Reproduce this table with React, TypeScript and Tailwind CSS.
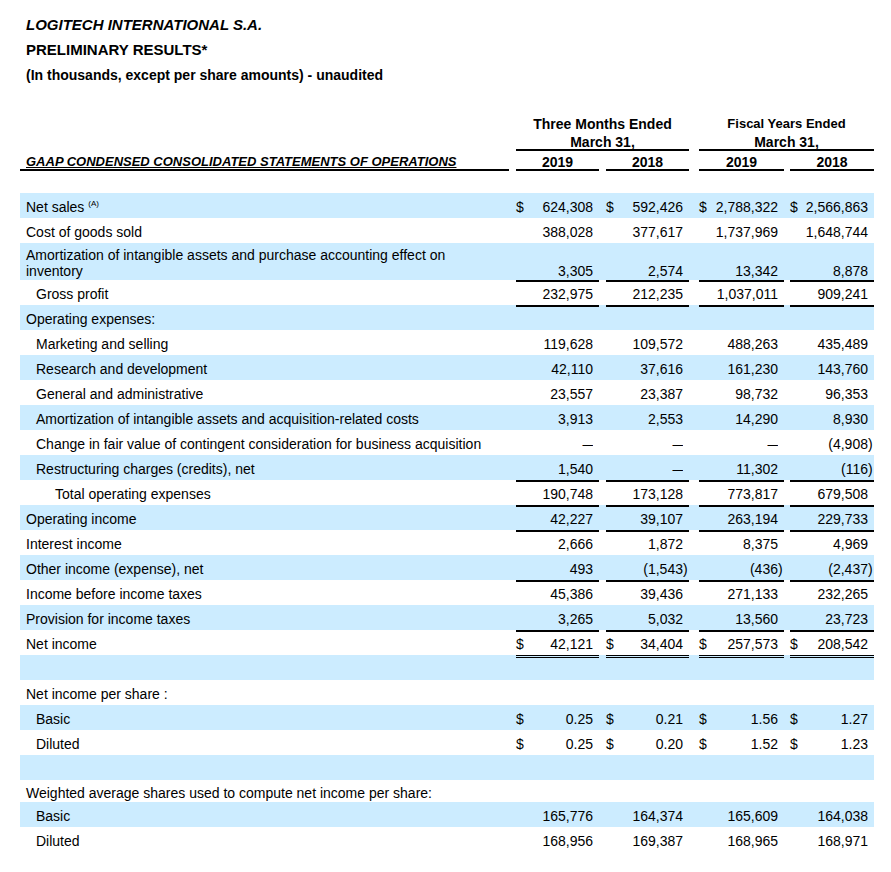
import React from 'react';

type Row = {
  label?: React.ReactNode;
  indent?: 0 | 1 | 2;
  vals?: string[];
  dollar?: boolean;
  shade?: boolean;
  ruleAbove?: 'single' | 'double';
  height?: 'tall' | 'short';
};

// column widths + gaps between the underline segments
const COLS = ['ml-[7px] w-[83px]', 'ml-[7px] w-[83px]', 'ml-[10px] w-[85px]', 'ml-[6px] w-[84px]'];

const rows: Row[] = [
  {
    label: (
      <>
        Net sales <sup className="text-[8px] -top-[6px]">(A)</sup>
      </>
    ),
    shade: true,
    dollar: true,
    vals: ['624,308', '592,426', '2,788,322', '2,566,863'],
  },
  { label: 'Cost of goods sold', vals: ['388,028', '377,617', '1,737,969', '1,648,744'] },
  {
    label: 'Amortization of intangible assets and purchase accounting effect on inventory',
    shade: true,
    height: 'tall',
    vals: ['3,305', '2,574', '13,342', '8,878'],
  },
  { label: 'Gross profit', indent: 1, ruleAbove: 'single', vals: ['232,975', '212,235', '1,037,011', '909,241'] },
  { label: 'Operating expenses:', shade: true, ruleAbove: 'single' },
  { label: 'Marketing and selling', indent: 1, vals: ['119,628', '109,572', '488,263', '435,489'] },
  { label: 'Research and development', indent: 1, shade: true, vals: ['42,110', '37,616', '161,230', '143,760'] },
  { label: 'General and administrative', indent: 1, vals: ['23,557', '23,387', '98,732', '96,353'] },
  {
    label: 'Amortization of intangible assets and acquisition-related costs',
    indent: 1,
    shade: true,
    vals: ['3,913', '2,553', '14,290', '8,930'],
  },
  {
    label: 'Change in fair value of contingent consideration for business acquisition',
    indent: 1,
    vals: ['—', '—', '—', '(4,908)'],
  },
  { label: 'Restructuring charges (credits), net', indent: 1, shade: true, vals: ['1,540', '—', '11,302', '(116)'] },
  { label: 'Total operating expenses', indent: 2, ruleAbove: 'single', vals: ['190,748', '173,128', '773,817', '679,508'] },
  { label: 'Operating income', shade: true, ruleAbove: 'single', vals: ['42,227', '39,107', '263,194', '229,733'] },
  { label: 'Interest income', ruleAbove: 'single', vals: ['2,666', '1,872', '8,375', '4,969'] },
  { label: 'Other income (expense), net', shade: true, vals: ['493', '(1,543)', '(436)', '(2,437)'] },
  { label: 'Income before income taxes', ruleAbove: 'single', vals: ['45,386', '39,436', '271,133', '232,265'] },
  { label: 'Provision for income taxes', shade: true, vals: ['3,265', '5,032', '13,560', '23,723'] },
  { label: 'Net income', ruleAbove: 'single', dollar: true, vals: ['42,121', '34,404', '257,573', '208,542'] },
  { shade: true, ruleAbove: 'double' },
  { label: 'Net income per share :' },
  { label: 'Basic', indent: 1, shade: true, dollar: true, vals: ['0.25', '0.21', '1.56', '1.27'] },
  { label: 'Diluted', indent: 1, dollar: true, vals: ['0.25', '0.20', '1.52', '1.23'] },
  { shade: true },
  { label: 'Weighted average shares used to compute net income per share:', height: 'short' },
  { label: 'Basic', indent: 1, shade: true, vals: ['165,776', '164,374', '165,609', '164,038'] },
  { label: 'Diluted', indent: 1, vals: ['168,956', '169,387', '168,965', '168,971'] },
];

const indentCls = ['pl-[6px]', 'pl-[16px]', 'pl-[35px]'];

const Amount = ({ v, dollar }: { v?: string; dollar?: boolean }) => {
  if (!v) return null;
  const neg = v.startsWith('(');
  return (
    <>
      <span>{dollar ? '$' : ''}</span>
      <span className="pr-[6px] whitespace-nowrap">
        {v === '—' ? (
          <span className="inline-block origin-right scale-x-[0.75]">—</span>
        ) : neg ? (
          <>
            {v.slice(0, -1)}
            <span className="-mr-[4.67px]">)</span>
          </>
        ) : (
          v
        )}
      </span>
    </>
  );
};

const DataRow = ({ row }: { row: Row }) => {
  const tall = row.height === 'tall';
  const h = tall ? 'h-[37px]' : row.height === 'short' ? 'h-[22px]' : 'h-[25px]';
  const align = tall ? 'items-end pb-[1px] leading-[16px]' : 'items-center';
  const rule =
    row.ruleAbove === 'double'
      ? 'border-t-[3px] border-double border-black'
      : row.ruleAbove === 'single'
        ? 'border-t-2 border-black pt-[2px]'
        : tall
          ? ''
          : 'pt-[4px]';

  return (
    <div className={`flex ${h} ${row.shade ? 'bg-[#ccecff]' : ''}`}>
      <div className={`w-[489px] flex ${align} ${indentCls[row.indent ?? 0]} ${tall ? '' : 'pt-[4px]'}`}>
        <span className={tall ? 'max-w-[450px]' : ''}>{row.label}</span>
      </div>
      {COLS.map((c, i) => (
        <div key={i} className={`${c} flex justify-between ${align} ${rule}`}>
          <Amount v={row.vals?.[i]} dollar={row.dollar} />
        </div>
      ))}
    </div>
  );
};

export default function App() {
  return (
    <div className="min-h-[872px] bg-white text-black font-['Liberation_Sans',Arial,sans-serif] text-[14px] pl-[20px] pt-[12px]">
      <div className="w-[854px]">
        {/* report title */}
        <div className="pl-[6px] font-bold">
          <div className="h-[25px] leading-[25px] text-[15px] italic">LOGITECH INTERNATIONAL S.A.</div>
          <div className="h-[25px] leading-[25px] text-[15px]">PRELIMINARY RESULTS*</div>
          <div className="h-[26px] leading-[26px]">(In thousands, except per share amounts) - unaudited</div>
        </div>

        {/* column headers */}
        <div className="mt-[27px] font-bold">
          <div className="flex h-[18px] leading-[18px]">
            <div className="w-[489px]" />
            <div className="ml-[7px] w-[173px] text-center">Three Months Ended</div>
            <div className="ml-[10px] w-[175px] text-center text-[13px]">Fiscal Years Ended</div>
          </div>
          <div className="flex h-[18px] leading-[14px]">
            <div className="w-[489px]" />
            <div className="ml-[7px] w-[173px] text-center pt-[2px] border-b-2 border-black">March 31,</div>
            <div className="ml-[10px] w-[175px] text-center pt-[2px] border-b-2 border-black">March 31,</div>
          </div>
          <div className="flex h-[20px] leading-[14px]">
            <div className="w-[489px] pl-[6px] flex items-end border-b-2 border-black">
              <span className="text-[13px] italic underline underline-offset-[1px]">
                GAAP CONDENSED CONSOLIDATED STATEMENTS OF OPERATIONS
              </span>
            </div>
            {['2019', '2018', '2019', '2018'].map((y, i) => (
              <div key={i} className={`${COLS[i]} text-center pt-[4px] border-b-2 border-black`}>
                {y}
              </div>
            ))}
          </div>
        </div>

        {/* statement body */}
        <div className="mt-[22px]">
          {rows.map((r, i) => (
            <DataRow key={i} row={r} />
          ))}
        </div>
      </div>
    </div>
  );
}
